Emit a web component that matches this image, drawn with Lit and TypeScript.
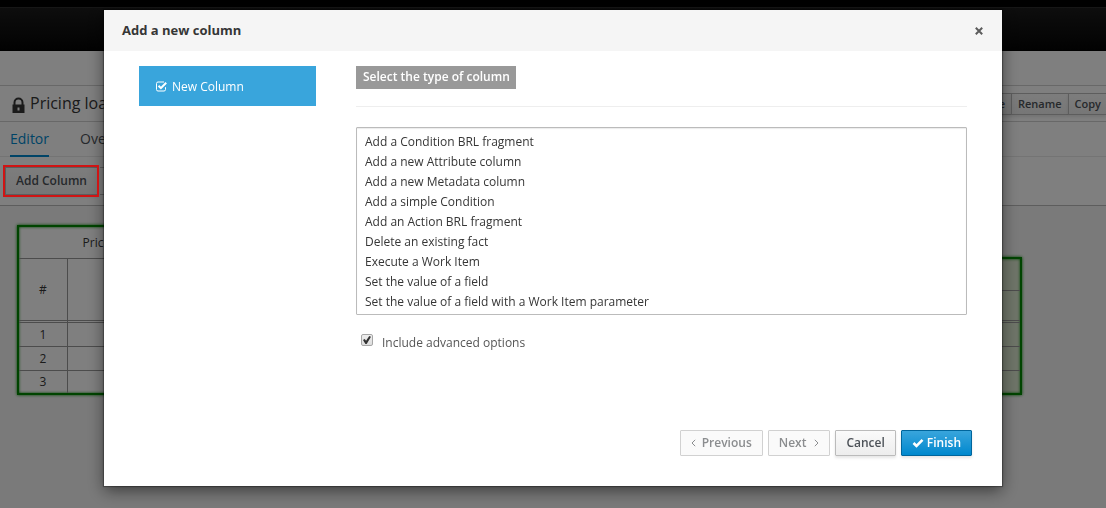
import { LitElement, html, css, svg } from "lit";
import { customElement, state } from "lit/decorators.js";

const lockIcon = svg`<path d="M2.500 8V5.500a4 4 0 0 1 8 0V8" fill="none" stroke="currentColor" stroke-width="2"/><path fill-rule="evenodd" d="M.5 7.500h12v8.500H.5zM5.500 10.500h2v3h-2z" fill="currentColor"/>`;

@customElement("guided-table-editor")
class GuidedTableEditor extends LitElement {
  static styles = css`
    :host {
      display: flex;
      flex-direction: column;
      height: 100%;
      overflow: hidden;
      background: #fff;
      color: #363636;
      font: 12px/20px "Open Sans", sans-serif;
    }
    .masthead {
      height: 43px;
      flex: none;
      border-top: 7px solid #000;
      box-shadow: inset 0 1px #2c2c2c;
      background: linear-gradient(#1c1c1c, #050505);
      border-bottom: 1px solid #000;
    }
    .breadcrumb {
      height: 34px;
      flex: none;
      border-bottom: 1px solid #d1d1d1;
    }
    .title-bar {
      display: flex;
      align-items: center;
      height: 35px;
      flex: none;
      padding-left: 12px;
      border-bottom: 1px solid #d1d1d1;
    }
    .title-bar svg {
      margin-top: 3px;
    }
    .title {
      margin: 0 auto 2px 5px;
      font-size: 16px;
      font-weight: 400;
      white-space: nowrap;
    }
    .actions {
      display: flex;
    }
    .btn {
      font: 600 12px/20px "Open Sans", sans-serif;
      color: #4d5258;
      background: linear-gradient(#fafafa, #ededed);
      border: 1px solid #bbb;
      box-shadow: 0 2px 3px rgba(3, 3, 3, 0.1);
      white-space: nowrap;
    }
    .actions .btn {
      font-size: 11px;
      padding: 0 6px;
      border-right: 0;
    }
    .actions .btn:last-child {
      padding-right: 5px;
    }
    .tabs {
      display: flex;
      gap: 31px;
      height: 34px;
      flex: none;
      padding-left: 10px;
      border-bottom: 1px solid #e9e9e9;
      font-size: 14px;
      line-height: 34px;
    }
    .tab {
      color: #4d5258;
      text-decoration: none;
    }
    .tab.active {
      color: #0088ce;
      box-shadow: inset 0 -1px #0088ce, 0 1px #0088ce;
    }
    .toolbar {
      display: flex;
      align-items: center;
      height: 48px;
      flex: none;
      padding-left: 5px;
      border-bottom: 1px solid #bbb;
    }
    .toolbar .btn {
      padding: 3px 10px;
    }
    .toolbar .group {
      flex: none;
      width: 200px;
      height: 26px;
      margin-left: 2px;
      border: solid #bbb;
      border-width: 1px 0;
    }
    .canvas {
      display: flex;
      align-items: start;
      flex: 1;
      background: #f5f5f5;
      padding: 19px 84px 0 17px;
    }
    .pair {
      display: flex;
      align-items: flex-end;
      flex: 1;
    }
    .grid {
      border-collapse: separate;
      border-spacing: 0;
      table-layout: fixed;
      box-sizing: border-box;
      border: 2px solid #080;
      box-shadow: 0 0 3px #080, inset 0 0 3px #080;
      background: #fff;
      text-align: center;
    }
    .left {
      flex: none;
      width: 202px;
    }
    .right {
      flex: 1;
      background: #deebd2;
    }
    .index {
      width: 49px;
    }
    th, td {
      box-sizing: border-box;
      height: 24px;
      padding: 0;
      font-weight: 400;
      border-bottom: 1px solid #999;
    }
    .left th:first-child:not([colspan]), .left td:first-child {
      border-right: 1px solid #999;
    }
    .name th {
      height: 32px;
    }
    .left .heads th {
      height: 64px;
      border-bottom: 3px double #999;
    }
    .right .heads th {
      height: 32px;
      border-bottom: 3px double #999;
    }
    tr:last-child td {
      height: 22px;
      border-bottom: 0;
    }
  `;

  render() {
    const rows = [1, 2, 3];
    return html`
      <div class="masthead"></div>
      <div class="breadcrumb"></div>
      <div class="title-bar">
        <svg width="13" height="16" viewBox="0 0 13 16">${lockIcon}</svg>
        <h1 class="title">Pricing loans</h1>
        <div class="actions">
          ${["Delete", "Rename", "Copy"].map((t) => html`<button class="btn">${t}</button>`)}
        </div>
      </div>
      <nav class="tabs">
        <a class="tab active" href="#editor">Editor</a>
        <a class="tab" href="#overview">Overview</a>
      </nav>
      <div class="toolbar">
        <button class="btn">Add Column</button>
        <div class="group"></div>
      </div>
      <div class="canvas">
        <div class="pair">
          <table class="grid left">
            <colgroup><col class="index" /><col /></colgroup>
            <thead>
              <tr class="name"><th colspan="2">Pricing loans</th></tr>
              <tr class="heads"><th>#</th><th></th></tr>
            </thead>
            <tbody>
              ${rows.map((n) => html`<tr><td>${n}</td><td></td></tr>`)}
            </tbody>
          </table>
          <table class="grid right">
            <thead>
              <tr class="name"><th></th></tr>
              <tr class="heads"><th></th></tr>
            </thead>
            <tbody>
              ${rows.map(() => html`<tr><td></td></tr>`)}
            </tbody>
          </table>
        </div>
      </div>
    `;
  }
}

const COLUMN_TYPES = [
  "Add a Condition BRL fragment",
  "Add a new Attribute column",
  "Add a new Metadata column",
  "Add a simple Condition",
  "Add an Action BRL fragment",
  "Delete an existing fact",
  "Execute a Work Item",
  "Set the value of a field",
  "Set the value of a field with a Work Item parameter",
];

@customElement("new-column-wizard")
class NewColumnWizard extends LitElement {
  static styles = css`
    :host {
      display: block;
      background: #fff;
      box-shadow: 0 5px 15px rgba(0, 0, 0, 0.5), 0 0 1px 1px rgba(0, 0, 0, 0.3);
      color: #363636;
      font: 12px/20px "Open Sans", sans-serif;
    }
    .header {
      display: flex;
      align-items: center;
      justify-content: space-between;
      height: 41px;
      padding: 0 18px;
      background: #f5f5f5;
    }
    .heading {
      margin: 0 0 2px;
      font-size: 13px;
      font-weight: 700;
    }
    .close {
      display: flex;
      padding: 0;
      border: 0;
      background: none;
      color: #5c5c5c;
    }
    .body {
      display: flex;
      gap: 40px;
      min-height: 364px;
      padding: 15px 35px 0;
      box-sizing: border-box;
    }
    .step {
      display: flex;
      align-items: center;
      gap: 5px;
      flex: none;
      width: 177px;
      height: 40px;
      box-sizing: border-box;
      padding: 2px 0 0 17px;
      background: #39a5dc;
      color: #fff;
      text-decoration: none;
    }
    .step svg {
      margin-bottom: 2px;
    }
    .content {
      flex: 1;
      min-width: 0;
    }
    .caption {
      padding-bottom: 17px;
      border-bottom: 1px solid #eee;
    }
    .tag {
      display: block;
      width: fit-content;
      height: 23px;
      line-height: 22px;
      padding: 0 6px 0 7px;
      background: #999;
      color: #fff;
      font-weight: 600;
    }
    .types {
      display: block;
      width: 100%;
      height: 188px;
      margin-top: 20px;
      box-sizing: border-box;
      padding: 5px 6px 1px;
      border: 1px solid #bbb;
      border-radius: 1px;
      box-shadow: inset 0 1px 1px rgba(3, 3, 3, 0.08);
      background: #fff;
      color: #363636;
      font: 12px/20px "Open Sans", sans-serif;
      outline: 0;
      overflow: hidden;
    }
    .types option {
      display: block;
      height: 20px;
      min-height: 20px;
      line-height: 20px;
      padding: 0 2px;
    }
    .advanced {
      display: flex;
      align-items: center;
      gap: 9px;
      width: fit-content;
      margin: 18px 0 0 5px;
      color: #555;
    }
    .advanced input {
      appearance: none;
      display: grid;
      place-items: center;
      width: 12px;
      height: 12px;
      margin: 0 0 6px;
      border: 1px solid #a6a6a6;
      border-radius: 2px;
      background: linear-gradient(#eee, #ddd);
      box-sizing: border-box;
    }
    .advanced input:checked::before {
      content: "";
      width: 8px;
      height: 8px;
      background: #333;
      clip-path: polygon(0 50%, 22% 38%, 38% 60%, 78% 0, 100% 10%, 46% 100%, 30% 100%);
    }
    .footer {
      display: flex;
      justify-content: flex-end;
      gap: 5px;
      padding: 15px 30px 30px;
    }
    .btn {
      display: flex;
      align-items: center;
      height: 26px;
      box-sizing: border-box;
      padding: 0 10px;
      border: 1px solid #bbb;
      border-radius: 1px;
      background: linear-gradient(#fafafa, #ededed);
      box-shadow: 0 2px 3px rgba(3, 3, 3, 0.1);
      color: #4d5258;
      font: 600 12px/20px "Open Sans", sans-serif;
    }
    .btn:disabled {
      border-color: #d1d1d1;
      background: #fafafa;
      box-shadow: none;
      color: #8b8d8f;
    }
    .btn.back {
      gap: 6px;
    }
    .btn.next {
      gap: 8px;
    }
    .btn.primary {
      gap: 3px;
      border-color: #00659c;
      background: linear-gradient(#39a5dc, #0088ce);
      color: #fff;
    }
  `;

  @state() advanced = true;

  render() {
    return html`
      <div class="header">
        <h2 class="heading">Add a new column</h2>
        <button class="close" aria-label="Close">
          <svg width="10" height="10" viewBox="0 0 10 10">
            <path d="M1.800 1.800L8.200 8.200M8.200 1.800L1.800 8.200" stroke="currentColor" stroke-width="2" />
          </svg>
        </button>
      </div>
      <div class="body">
        <a class="step" href="#new-column">
          <svg width="11" height="11" viewBox="0 0 11 11" fill="none" stroke="currentColor">
            <path d="M9.500 6.200v2.300a1.500 1.500 0 0 1-1.500 1.500H2a1.500 1.500 0 0 1-1.500-1.500v-6A1.500 1.500 0 0 1 2 1h6" />
            <path d="M2.500 4.800l2.400 2.400 5.300-5.400" stroke-width="2" />
          </svg>
          New Column
        </a>
        <div class="content">
          <div class="caption"><label class="tag" for="types">Select the type of column</label></div>
          <select class="types" id="types" size="9">
            ${COLUMN_TYPES.map((t) => html`<option>${t}</option>`)}
          </select>
          <label class="advanced">
            <input
              type="checkbox"
              .checked=${this.advanced}
              @change=${(e: Event) => (this.advanced = (e.target as HTMLInputElement).checked)}
            />
            Include advanced options
          </label>
        </div>
      </div>
      <div class="footer">
        <button class="btn back" disabled>
          <svg width="5" height="8" viewBox="0 0 5 8"><path d="M4.200.8L1 4l3.200 3.200" fill="none" stroke="currentColor" /></svg>
          Previous
        </button>
        <button class="btn next" disabled>
          Next
          <svg width="5" height="8" viewBox="0 0 5 8"><path d="M.8.8L4 4 .8 7.200" fill="none" stroke="currentColor" /></svg>
        </button>
        <button class="btn">Cancel</button>
        <button class="btn primary">
          <svg width="12" height="10" viewBox="0 0 12 10"><path d="M1.500 5l3 3 6-6.200" fill="none" stroke="currentColor" stroke-width="2.600" /></svg>
          Finish
        </button>
      </div>
    `;
  }
}

@customElement("app-root")
class AppRoot extends LitElement {
  static styles = css`
    :host {
      display: block;
      height: 100vh;
    }
    .backdrop {
      position: fixed;
      inset: 0;
      z-index: 2;
      overflow: hidden;
      background: rgba(0, 0, 0, 0.5);
    }
    .dialog {
      max-width: 898px;
      margin: 10px auto;
    }
    /* Callout frame over the Add Column button, kept above the backdrop. */
    .callout {
      position: absolute;
      left: 3px;
      top: 165px;
      z-index: 3;
      width: 96px;
      height: 32px;
      box-sizing: border-box;
      border: 2px solid #d01414;
      pointer-events: none;
    }
  `;

  render() {
    return html`
      <guided-table-editor></guided-table-editor>
      <div class="backdrop">
        <new-column-wizard class="dialog" role="dialog" aria-label="Add a new column"></new-column-wizard>
      </div>
      <div class="callout"></div>
    `;
  }
}
